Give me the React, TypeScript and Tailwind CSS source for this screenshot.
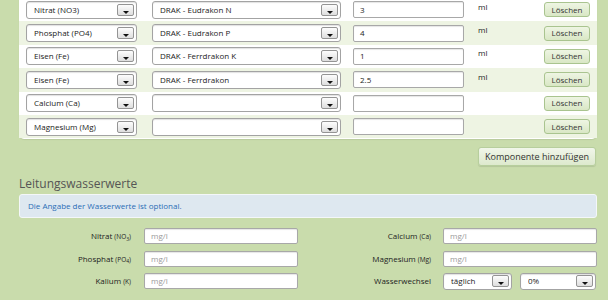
import React from 'react'

const FONT = { fontFamily: '"Open Sans", "DejaVu Sans", sans-serif' }

const ROWS = [
  { comp: 'Nitrat (NO3)', product: 'DRAK - Eudrakon N', amount: '3', unit: 'ml' },
  { comp: 'Phosphat (PO4)', product: 'DRAK - Eudrakon P', amount: '4', unit: 'ml' },
  { comp: 'Eisen (Fe)', product: 'DRAK - Ferrdrakon K', amount: '1', unit: 'ml' },
  { comp: 'Eisen (Fe)', product: 'DRAK - Ferrdrakon', amount: '2.5', unit: 'ml' },
  { comp: 'Calcium (Ca)', product: '', amount: '', unit: '' },
  { comp: 'Magnesium (Mg)', product: '', amount: '', unit: '' },
]

function DropArrow() {
  return (
    <div className="w-[17px] h-[12px] border border-[#949494] rounded-[2px] bg-gradient-to-b from-[#fdfdfd] to-[#dedede] flex items-end justify-center shrink-0">
      <div className="w-0 h-0 border-l-[3.5px] border-r-[3.5px] border-t-[3px] border-l-transparent border-r-transparent border-t-[#111] mb-[1px]" />
    </div>
  )
}

function Select({ value, className }: { value: string; className: string }) {
  return (
    <div className={`h-[18px] bg-white border border-[#a3a3a3] rounded-[3px] shadow-[inset_0_1px_1px_rgba(0,0,0,0.12)] flex items-center pl-[7px] pr-[2px] ${className}`}>
      <span className="flex-1 text-[8px] text-[#222] truncate">{value}</span>
      <DropArrow />
    </div>
  )
}

function TextBox({ value, className, placeholder }: { value?: string; className: string; placeholder?: string }) {
  return (
    <div className={`bg-white border border-[#a8a8a8] rounded-[2px] shadow-[inset_0_1px_1px_rgba(0,0,0,0.1)] flex items-center pl-[6px] text-[8px] ${className}`}>
      {value ? <span className="text-[#222]">{value}</span> : <span className="text-[#9a9a9a]">{placeholder}</span>}
    </div>
  )
}

function FormLabel({ main, sub, width }: { main: string; sub?: React.ReactNode; width: string }) {
  return (
    <div className={`${width} text-right text-[8px] text-[#222] shrink-0`}>
      {main}
      {sub && <span className="text-[6.5px] ml-[2px]">{sub}</span>}
    </div>
  )
}

export default function App() {
  return (
    <div className="w-[608px] h-[300px] bg-[#c9dcac] overflow-hidden" style={FONT}>
      {/* Komponenten table */}
      <div className="ml-[19px] w-[578px] mt-[-2px] bg-white rounded-b-[5px] pb-[1px] shadow-[0_1px_1px_rgba(0,0,0,0.08)]">
        {ROWS.map((r, i) => (
          <div key={i} className={`h-[23.4px] flex items-center pl-[7px] ${i % 2 === 1 ? 'bg-[#eef4e3]' : 'bg-white'}`}>
            <Select value={r.comp} className="w-[111px]" />
            <Select value={r.product} className="w-[189px] ml-[15px]" />
            <TextBox value={r.amount} className="w-[111px] h-[17px] ml-[12px]" />
            <span className="w-[80px] pl-[14px] text-[8px] text-[#222] -mt-[6px]">{r.unit}</span>
            <button className="w-[46px] h-[15px] rounded-[3px] border border-[#a9c48f] bg-gradient-to-b from-[#eef5e3] to-[#d9e7c5] text-[8px] text-[#333] flex items-center justify-center">
              Löschen
            </button>
          </div>
        ))}
      </div>

      <div className="flex justify-end pr-[12px] pt-[8px]">
        <button className="w-[118px] h-[19px] rounded-[3px] border border-[#b7ce9d] bg-gradient-to-b from-[#f1f6ea] to-[#dde9cd] shadow-[0_1px_1px_rgba(0,0,0,0.1)] text-[9px] text-[#333] flex items-center justify-center">
          Komponente hinzufügen
        </button>
      </div>

      {/* Leitungswasserwerte */}
      <div className="ml-[19px] mt-[8px] h-[20px] flex items-center text-[12px] text-[#555]">Leitungswasserwerte</div>
      <div className="ml-[19px] w-[578px] h-[24px] bg-[#dee8f0] border border-[#f4f7f9] rounded-[3px] flex items-center pl-[8px] text-[8px] text-[#2a6db6]">
        Die Angabe der Wasserwerte ist optional.
      </div>

      <div className="mt-[10px] flex flex-col gap-y-[6.5px]">
        <div className="flex items-center h-[16px]">
          <FormLabel main="Nitrat" sub={<>(NO<sub className="text-[5px]">3</sub>)</>} width="w-[131px]" />
          <TextBox placeholder="mg/l" className="w-[154px] h-[16px] ml-[13px]" />
          <FormLabel main="Calcium" sub="(Ca)" width="w-[133px]" />
          <TextBox placeholder="mg/l" className="w-[154px] h-[16px] ml-[12px]" />
        </div>
        <div className="flex items-center h-[16px]">
          <FormLabel main="Phosphat" sub={<>(PO<sub className="text-[5px]">4</sub>)</>} width="w-[131px]" />
          <TextBox placeholder="mg/l" className="w-[154px] h-[16px] ml-[13px]" />
          <FormLabel main="Magnesium" sub="(Mg)" width="w-[133px]" />
          <TextBox placeholder="mg/l" className="w-[154px] h-[16px] ml-[12px]" />
        </div>
        <div className="flex items-center h-[16px]">
          <FormLabel main="Kalium" sub="(K)" width="w-[131px]" />
          <TextBox placeholder="mg/l" className="w-[154px] h-[16px] ml-[13px]" />
          <FormLabel main="Wasserwechsel" width="w-[133px]" />
          <Select value="täglich" className="w-[69px] !h-[17px] ml-[12px]" />
          <Select value="0%" className="w-[76px] !h-[17px] ml-[8px]" />
        </div>
      </div>
    </div>
  )
}
